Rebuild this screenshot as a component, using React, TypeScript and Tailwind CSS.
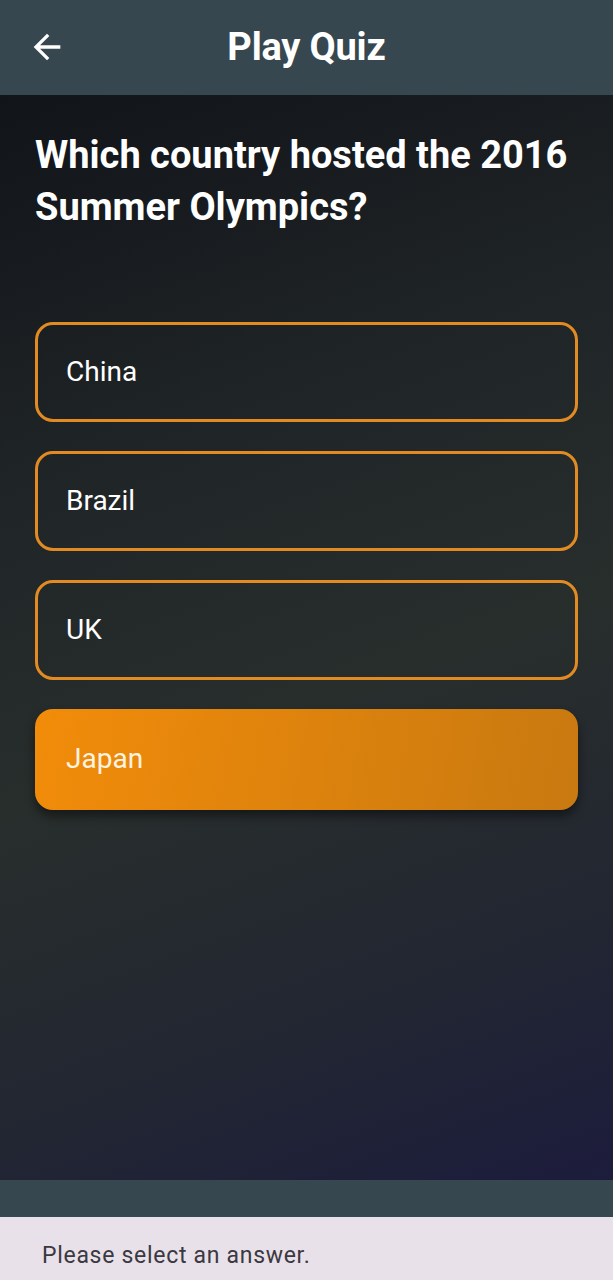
const options = ["China", "Brazil", "UK", "Japan"];

function BackArrow() {
  return (
    <svg width="40" height="40" viewBox="0 0 24 24" fill="#ffffff">
      <path d="M20 11H7.83l5.59-5.59L12 4l-8 8 8 8 1.41-1.41L7.83 13H20v-2z" />
    </svg>
  );
}

export default function App() {
  const selected = "Japan";

  return (
    <div
      className="flex flex-col w-full h-[1280px] overflow-hidden"
      style={{ fontFamily: "Roboto, 'Noto Sans', sans-serif" }}
    >
      {/* App bar */}
      <header className="relative h-[95px] shrink-0 bg-[#37474f] flex items-center justify-center">
        <button className="absolute left-[27px] top-[27px]">
          <BackArrow />
        </button>
        <h1 className="text-white text-[38px] font-bold tracking-[-0.2px]">Play Quiz</h1>
      </header>

      {/* Quiz body */}
      <main className="flex-1 px-[35px] pt-[34px] bg-[linear-gradient(160deg,#111418_0%,#1f2427_30%,#282e2c_55%,#222632_80%,#1c1c3c_100%)]">
        <h2 className="text-white font-bold text-[38px] leading-[52.3px]">
          Which country hosted the 2016 Summer Olympics?
        </h2>

        <div className="mt-[88px] flex flex-col gap-[29px]">
          {options.map((o) =>
            o === selected ? (
              <button
                key={o}
                className="h-[101px] rounded-[18px] px-[31px] text-left text-[28px] text-[#fff4e0] bg-[linear-gradient(100deg,#f28c0a,#c87910)] shadow-[0_6px_10px_rgba(0,0,0,0.45)]"
              >
                {o}
              </button>
            ) : (
              <button
                key={o}
                className="h-[100px] rounded-[18px] border-[3px] border-[#e38b23] px-[28px] text-left text-[28px] text-white"
              >
                {o}
              </button>
            )
          )}
        </div>
      </main>

      {/* bottom bar */}
      <div className="h-[37px] shrink-0 bg-[#37474f]" />

      {/* snackbar */}
      <div className="h-[63px] shrink-0 bg-[#e8e1e9] px-[42px] pt-[25px]">
        <p className="text-[23px] leading-[27px] tracking-[0.7px] text-[#3b3840]">
          Please select an answer.
        </p>
      </div>
    </div>
  );
}
